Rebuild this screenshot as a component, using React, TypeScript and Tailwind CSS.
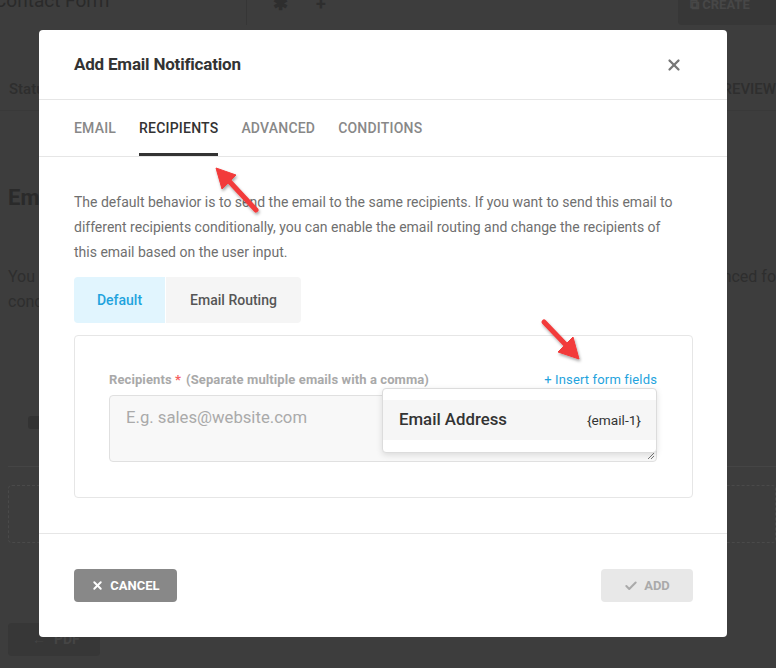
import { X, Check } from "lucide-react";

const tabs = ["Email", "Recipients", "Advanced", "Conditions"];

function BackgroundPage() {
	return (
		<div className="flex h-full w-full flex-col bg-[#3d3d3d] text-[#2c2c2c]">
			{/* top bar */}
			<div className="flex h-[25px] items-stretch">
				<div className="flex w-[247px] items-center border-r border-[#363636]">
					<span className="-mt-[22px] -ml-[6px] text-[19px] text-[#2a2a2a]">Contact Form</span>
				</div>
				<div className="flex items-center gap-[28px] pl-[26px] text-[18px] font-bold text-[#2e2e2e]">
					<span className="-mt-[18px]">✱</span>
					<span className="-mt-[18px]">+</span>
				</div>
				<div className="flex-1" />
				<div className="flex w-[98px] items-center rounded-bl-[4px] bg-[#373737] pl-[12px] text-[13px] font-bold text-[#474747]">
					<span className="-mt-[16px]">⧉ CREATE</span>
				</div>
			</div>
			{/* sub tabs */}
			<div className="mt-[44px] flex h-[42px] items-center justify-between border-b border-[#393939] pl-[9px] text-[15px] font-medium text-[#2e2e2e]">
				<span>Status</span>
				<span>REVIEW</span>
			</div>
			<div className="mt-[70px] pl-[8px] text-[22px] font-bold text-[#2a2a2a]">Email Notifications</div>
			<div className="mt-[50px] flex justify-between pl-[8px] text-[16px] leading-[25px] text-[#2e2e2e]">
				<span>You can add multiple notifications</span>
				<span>advanced fo</span>
			</div>
			<div className="pl-[8px] text-[16px] leading-[25px] text-[#2e2e2e]">conditions</div>
			<div className="mt-[102px] ml-[28px] h-[13px] w-[40px] rounded-[3px] bg-[#333333]" />
			<div className="mt-[37px] ml-[8px] border-t border-[#454545]" />
			<div className="mt-[18px] ml-[8px] h-[58px] rounded-[4px] border border-dashed border-[#4a4a4a]" />
			<div className="mt-[80px] ml-[8px] flex h-[33px] w-[92px] items-center gap-2 rounded-[4px] bg-[#373737] pl-[24px] text-[14px] font-bold text-[#454545]">
				<span>←</span>
				<span>PDF</span>
			</div>
		</div>
	);
}

function Arrows() {
	return (
		<svg className="pointer-events-none absolute inset-0" width="776" height="668" viewBox="0 0 776 668">
			<defs>
				<filter id="sh" x="-20%" y="-20%" width="140%" height="140%">
					<feDropShadow dx="1" dy="2" stdDeviation="1.5" floodColor="#000" floodOpacity="0.35" />
				</filter>
			</defs>
			<g filter="url(#sh)" fill="#f23a3a" stroke="#f23a3a">
				<line x1="256" y1="210" x2="229" y2="181" strokeWidth="5" strokeLinecap="round" />
				<polygon points="216,168 236,175 222,189" strokeWidth="1" strokeLinejoin="round" />
				<line x1="544" y1="322" x2="566" y2="345" strokeWidth="5" strokeLinecap="round" />
				<polygon points="579,359 558,352 573,337" strokeWidth="1" strokeLinejoin="round" />
			</g>
		</svg>
	);
}

export default function App() {
	return (
		<div
			className="relative h-[668px] w-[776px] overflow-hidden"
			style={{ fontFamily: "Roboto, 'Liberation Sans', sans-serif" }}
		>
			<BackgroundPage />

			{/* Modal */}
			<div className="absolute top-[30px] left-[39px] w-[688px] rounded-[4px] bg-white">
				{/* Header */}
				<div className="flex h-[70px] items-center justify-between border-b border-[#e6e6e6] pr-[34px] pl-[35px]">
					<h2 className="text-[17px] font-bold tracking-[-0.2px] text-[#333]">Add Email Notification</h2>
					<X className="mr-[10px] h-[18px] w-[18px] text-[#777]" strokeWidth={3} />
				</div>

				{/* Tabs */}
				<div className="flex h-[57px] items-stretch gap-[23px] border-b border-[#e6e6e6] px-[35px]">
					{tabs.map((t) => (
						<div
							key={t}
							className={
								t === "Recipients"
									? "flex items-center border-y-[3px] border-t-transparent border-b-[#333] text-[14px] font-medium tracking-[0.2px] uppercase text-[#333]"
									: "flex items-center border-y-[3px] border-transparent text-[14px] font-medium tracking-[0.2px] uppercase text-[#888]"
							}
						>
							{t}
						</div>
					))}
				</div>

				{/* Body */}
				<div className="pt-[33px] pr-[34px] pb-[35px] pl-[35px]">
					<p className="max-w-[611px] text-[14px] leading-[25px] text-[#6f6f6f]">
						The default behavior is to send the email to the same recipients. If you want to send this email to
						different recipients conditionally, you can enable the email routing and change the recipients of
						this email based on the user input.
					</p>

					<div className="mt-[12px] flex h-[46px] w-[227px] overflow-hidden rounded-[4px] text-[14px] font-medium">
						<div className="flex w-[91px] items-center justify-center bg-[#e1f5fe] text-[#1fa3dd]">Default</div>
						<div className="ml-px flex flex-1 items-center justify-center bg-[#f5f5f5] text-[#555]">Email Routing</div>
					</div>

					<div className="mt-[12px] rounded-[4px] border border-[#e6e6e6] pt-[36px] pr-[35px] pb-[35px] pl-[34px]">
						<div className="flex items-end justify-between">
							<div className="text-[13px] leading-[16px] font-bold tracking-[0.1px] text-[#a9a9a9]">
								Recipients <span className="text-[#f56161]">*</span>
								<span className="ml-[5px]">(Separate multiple emails with a comma)</span>
							</div>
							<span className="text-[13px] leading-[16px] tracking-[0.15px] text-[#1fa3dd]">+ Insert form fields</span>
						</div>

						<div className="relative mt-[7px]">
							<div className="h-[67px] rounded-[4px] border border-[#e0e0e0] bg-[#f8f8f8] px-[16px] pt-[9px] text-[16.7px] text-[#aaa]">
								E.g. sales@website.com
							</div>
							<svg className="absolute right-[2px] bottom-[2px]" width="8" height="8" viewBox="0 0 8 8">
								<path d="M7 1L1 7M7 4L4 7" stroke="#777" strokeWidth="1" />
							</svg>

							{/* dropdown */}
							<div className="absolute top-[-7px] right-0 h-[65px] w-[275px] rounded-[4px] border border-[#dcdcdc] bg-white pt-[11px] shadow-[0_2px_6px_rgba(0,0,0,0.12)]">
								<div className="flex h-[40px] items-center justify-between bg-[#f6f6f6] pr-[15px] pl-[16px]">
									<span className="text-[16.8px] font-medium text-[#333]">Email Address</span>
									<span className="text-[13.7px] text-[#333]">{"{email-1}"}</span>
								</div>
							</div>
						</div>
					</div>
				</div>

				{/* Footer */}
				<div className="flex items-center justify-between border-t border-[#e6e6e6] pt-[35px] pr-[34px] pb-[35px] pl-[35px]">
					<button className="flex h-[33px] w-[103px] items-center justify-center gap-[6px] rounded-[4px] bg-[#888] text-[13px] font-bold text-white">
						<X className="h-[13px] w-[13px]" strokeWidth={3.5} />
						CANCEL
					</button>
					<button className="flex h-[33px] w-[92px] items-center justify-center gap-[6px] rounded-[4px] bg-[#e8e8e8] text-[13px] font-bold text-[#aaa]">
						<Check className="h-[14px] w-[14px]" strokeWidth={3.5} />
						ADD
					</button>
				</div>
			</div>

			<Arrows />
		</div>
	);
}
